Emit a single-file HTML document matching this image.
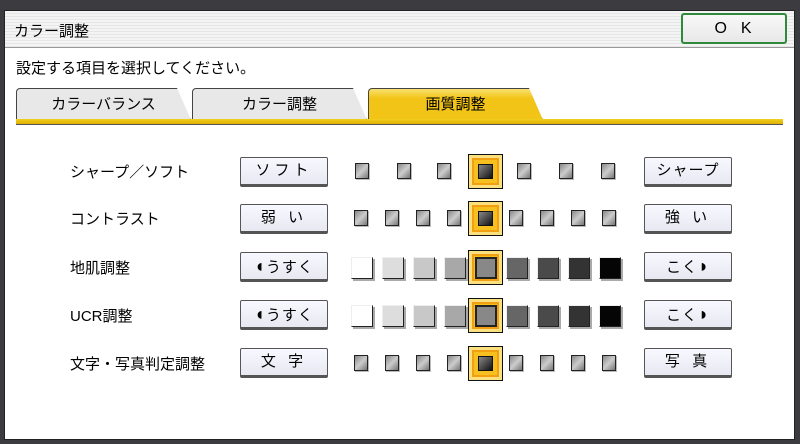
<!DOCTYPE html>
<html><head><meta charset="utf-8"><style>
*{margin:0;padding:0;box-sizing:border-box;font-weight:normal}
body{width:800px;height:444px;background:#3c3c40;position:relative;overflow:hidden;font-family:"Liberation Sans","Noto Sans CJK JP",sans-serif;color:#000}
.a{position:absolute}
#panel{left:4px;top:10px;width:791px;height:430px;background:#fff;border:1px solid #222}
#title{left:5px;top:11px;width:789px;height:37px;background:repeating-linear-gradient(#f4f4f4 0 2px,#e6e6e6 2px 3px);border-bottom:1px solid #999}
.t{font-size:15px;white-space:nowrap}
#ok{left:681px;top:13px;width:106px;height:31px;border:2px solid #2e8a3a;border-radius:3px;background:linear-gradient(#f8f8f8,#e8e8e8);font-size:16px;text-align:center;line-height:27px;letter-spacing:14px;padding-left:12px}
.tab{top:88px;height:32px;font-size:15px;line-height:32px;text-align:center;background:#e8e8e8;border:1px solid #444;border-bottom:none;border-radius:4px 4px 0 0;clip-path:polygon(0 0,92% 0,100% 100%,0 100%)}
#bar{left:16px;top:119px;width:767px;height:6px;background:linear-gradient(#f0d020,#e0b000);border-bottom:1px solid #555}
.lb{left:70px;font-size:15px}
.btn{width:88px;height:30px;background:linear-gradient(#f8f8ff,#e8e8f2);border:1px solid #555;border-bottom:3px solid #555;border-radius:2px;font-size:15px;text-align:center;line-height:26px;letter-spacing:4px}
.btn b{font-size:18px;font-weight:normal}
.s{width:14px;height:16px;border:1px solid #222;background:linear-gradient(135deg,#888,#ccc 50%,#777);box-shadow:1px 1px 0 #bbb}
.sel{width:35px;height:35px;background:#f5c020;border:1px solid #111;box-shadow:inset 0 0 0 3px #fbe080,inset 0 0 0 5px #f0a010}
.sel i{position:absolute;left:50%;top:50%;width:15px;height:15px;margin:-7.5px;border:1px solid #111;background:linear-gradient(135deg,#888,#111)}
.b{width:22px;height:22px;border:1px solid #222;box-shadow:2px 2px 0 #aaa;border-top-color:#eee;border-left-color:#eee}
.sel2 i{width:22px;height:22px;margin:-11px;border:2px solid #222;background:#888}
</style></head><body>
<div class="a" id="panel"></div>
<div class="a" id="title"></div>
<div class="a t" style="left:14px;top:20px">カラー調整</div>
<div class="a" id="ok">OK</div>
<div class="a t" style="left:16px;top:57px">設定する項目を選択してください。</div>
<div class="a tab" style="left:16px;width:175px">カラーバランス</div>
<div class="a tab" style="left:192px;width:175px">カラー調整</div>
<div class="a tab" style="left:368px;width:175px;background:linear-gradient(#f8e070,#f2c418 30%)">画質調整</div>
<div class="a" id="bar"></div>

<div class="a lb" style="top:161px">シャープ／ソフト</div>
<div class="a lb" style="top:208px">コントラスト</div>
<div class="a lb" style="top:257px">地肌調整</div>
<div class="a lb" style="top:305px">UCR調整</div>
<div class="a lb" style="top:353px">文字・写真判定調整</div>

<div class="a btn" style="left:240px;top:157px">ソフト</div>
<div class="a btn" style="left:240px;top:204px">弱 い</div>
<div class="a btn" style="left:240px;top:252px;letter-spacing:1px"><b>◖</b>うすく</div>
<div class="a btn" style="left:240px;top:300px;letter-spacing:1px"><b>◖</b>うすく</div>
<div class="a btn" style="left:240px;top:348px">文 字</div>
<div class="a btn" style="left:644px;top:157px;letter-spacing:1px">シャープ</div>
<div class="a btn" style="left:644px;top:204px">強 い</div>
<div class="a btn" style="left:644px;top:252px;letter-spacing:1px">こく<b>◗</b></div>
<div class="a btn" style="left:644px;top:300px;letter-spacing:1px">こく<b>◗</b></div>
<div class="a btn" style="left:644px;top:348px">写 真</div>

<div class="a s" style="left:355px;top:163px"></div>
<div class="a s" style="left:397px;top:163px"></div>
<div class="a s" style="left:437px;top:163px"></div>
<div class="a sel" style="left:468px;top:154px"><i></i></div>
<div class="a s" style="left:517px;top:163px"></div>
<div class="a s" style="left:559px;top:163px"></div>
<div class="a s" style="left:601px;top:163px"></div>

<div class="a s" style="left:354px;top:210px"></div>
<div class="a s" style="left:385px;top:210px"></div>
<div class="a s" style="left:416px;top:210px"></div>
<div class="a s" style="left:447px;top:210px"></div>
<div class="a sel" style="left:468px;top:201px"><i></i></div>
<div class="a s" style="left:509px;top:210px"></div>
<div class="a s" style="left:540px;top:210px"></div>
<div class="a s" style="left:571px;top:210px"></div>
<div class="a s" style="left:602px;top:210px"></div>

<div class="a b" style="left:351px;top:257px;background:#fff"></div>
<div class="a b" style="left:382px;top:257px;background:#ddd"></div>
<div class="a b" style="left:413px;top:257px;background:#c8c8c8"></div>
<div class="a b" style="left:444px;top:257px;background:#a8a8a8"></div>
<div class="a sel sel2" style="left:468px;top:250px"><i></i></div>
<div class="a b" style="left:506px;top:257px;background:#666"></div>
<div class="a b" style="left:537px;top:257px;background:#4a4a4a"></div>
<div class="a b" style="left:568px;top:257px;background:#333"></div>
<div class="a b" style="left:599px;top:257px;background:#050505"></div>

<div class="a b" style="left:351px;top:305px;background:#fff"></div>
<div class="a b" style="left:382px;top:305px;background:#ddd"></div>
<div class="a b" style="left:413px;top:305px;background:#c8c8c8"></div>
<div class="a b" style="left:444px;top:305px;background:#a8a8a8"></div>
<div class="a sel sel2" style="left:468px;top:298px"><i></i></div>
<div class="a b" style="left:506px;top:305px;background:#666"></div>
<div class="a b" style="left:537px;top:305px;background:#4a4a4a"></div>
<div class="a b" style="left:568px;top:305px;background:#333"></div>
<div class="a b" style="left:599px;top:305px;background:#050505"></div>

<div class="a s" style="left:354px;top:355px"></div>
<div class="a s" style="left:385px;top:355px"></div>
<div class="a s" style="left:416px;top:355px"></div>
<div class="a s" style="left:447px;top:355px"></div>
<div class="a sel" style="left:468px;top:346px"><i></i></div>
<div class="a s" style="left:509px;top:355px"></div>
<div class="a s" style="left:540px;top:355px"></div>
<div class="a s" style="left:571px;top:355px"></div>
<div class="a s" style="left:602px;top:355px"></div>
</body></html>
